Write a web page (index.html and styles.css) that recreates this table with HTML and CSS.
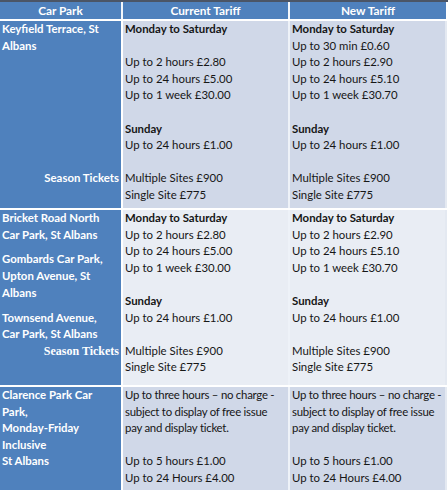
FILE: index.html
```html
<!DOCTYPE html>
<html>
<head>
<meta charset="utf-8">
<link rel="stylesheet" href="styles.css">
</head>
<body>
<div class="frame">
<table class="tariffs">
  <colgroup>
    <col class="c1">
    <col class="c2">
    <col class="c3">
  </colgroup>
  <thead>
    <tr>
      <th class="h1">Car Park</th>
      <th class="h2">Current Tariff</th>
      <th class="h3">New Tariff</th>
    </tr>
  </thead>
  <tbody>
    <tr class="dark r1">
      <td class="park">
        <div class="l">Keyfield Terrace, St</div>
        <div class="l">Albans</div>
        <div class="l"></div><div class="l"></div><div class="l"></div><div class="l"></div><div class="l"></div><div class="l"></div><div class="l"></div>
        <div class="l season">Season Tickets</div>
      </td>
      <td class="tariff">
        <div class="l b">Monday to Saturday</div>
        <div class="l"></div>
        <div class="l">Up to 2 hours £2.80</div>
        <div class="l">Up to 24 hours £5.00</div>
        <div class="l">Up to 1 week £30.00</div>
        <div class="l"></div>
        <div class="l b">Sunday</div>
        <div class="l">Up to 24 hours £1.00</div>
        <div class="l"></div>
        <div class="l">Multiple Sites £900</div>
        <div class="l">Single Site £775</div>
      </td>
      <td class="tariff new">
        <div class="l b">Monday to Saturday</div>
        <div class="l">Up to 30 min £0.60</div>
        <div class="l">Up to 2 hours £2.90</div>
        <div class="l">Up to 24 hours £5.10</div>
        <div class="l">Up to 1 week £30.70</div>
        <div class="l"></div>
        <div class="l b">Sunday</div>
        <div class="l">Up to 24 hours £1.00</div>
        <div class="l"></div>
        <div class="l">Multiple Sites £900</div>
        <div class="l">Single Site £775</div>
      </td>
    </tr>
    <tr class="light r2">
      <td class="park">
        <div class="l">Bricket Road North</div>
        <div class="l">Car Park, St Albans</div>
        <div class="l gap">Gombards Car Park,</div>
        <div class="l">Upton Avenue, St</div>
        <div class="l">Albans</div>
        <div class="l gap">Townsend Avenue,</div>
        <div class="l">Car Park, St Albans</div>
        <div class="l season serif">Season Tickets</div>
      </td>
      <td class="tariff">
        <div class="l b">Monday to Saturday</div>
        <div class="l">Up to 2 hours £2.80</div>
        <div class="l">Up to 24 hours £5.00</div>
        <div class="l">Up to 1 week £30.00</div>
        <div class="l"></div>
        <div class="l b">Sunday</div>
        <div class="l">Up to 24 hours £1.00</div>
        <div class="l"></div>
        <div class="l">Multiple Sites £900</div>
        <div class="l">Single Site £775</div>
      </td>
      <td class="tariff new">
        <div class="l b">Monday to Saturday</div>
        <div class="l">Up to 2 hours £2.90</div>
        <div class="l">Up to 24 hours £5.10</div>
        <div class="l">Up to 1 week £30.70</div>
        <div class="l"></div>
        <div class="l b">Sunday</div>
        <div class="l">Up to 24 hours £1.00</div>
        <div class="l"></div>
        <div class="l">Multiple Sites £900</div>
        <div class="l">Single Site £775</div>
      </td>
    </tr>
    <tr class="dark r3">
      <td class="park">
        <div class="l">Clarence Park Car</div>
        <div class="l">Park,</div>
        <div class="l">Monday-Friday</div>
        <div class="l">Inclusive</div>
        <div class="l">St Albans</div>
      </td>
      <td class="tariff">
        <div class="l tight">Up to three hours – no charge -</div>
        <div class="l tight">subject to display of free issue</div>
        <div class="l tight">pay and display ticket.</div>
        <div class="l"></div>
        <div class="l">Up to 5 hours £1.00</div>
        <div class="l">Up to 24 Hours £4.00</div>
      </td>
      <td class="tariff new">
        <div class="l tight">Up to three hours – no charge -</div>
        <div class="l tight">subject to display of free issue</div>
        <div class="l tight">pay and display ticket.</div>
        <div class="l"></div>
        <div class="l">Up to 5 hours £1.00</div>
        <div class="l">Up to 24 Hours £4.00</div>
      </td>
    </tr>
  </tbody>
</table>
</div>
</body>
</html>
```

FILE: styles.css
```css
html, body {
  margin: 0;
  padding: 0;
  background: #ffffff;
}

.frame {
  width: 448px;
  height: 492px;
  overflow: hidden;
  border-top: 2px solid #4b5566;
  box-sizing: border-box;
}

.tariffs {
  border-collapse: collapse;
  table-layout: fixed;
  width: 446px;
  font-family: Lato, "Liberation Sans", sans-serif;
  font-size: 11.4px;
  color: #161616;
}

.c1 { width: 122px; }
.c2 { width: 167px; }
.c3 { width: 157px; }

th {
  background: #4f81bd;
  color: #ffffff;
  font-weight: bold;
  font-size: 11.8px;
  height: 17px;
  padding: 0;
  line-height: 17px;
  text-align: center;
  border-bottom: 2px solid #ffffff;
}

th.h1, th.h2 { border-right: 2px solid #f4f7fb; }

td {
  vertical-align: top;
  padding: 0 2px;
  border-bottom: 2px solid #ffffff;
}

td.park {
  background: #4f81bd;
  color: #ffffff;
  font-weight: bold;
  border-right: 2px solid #ffffff;
}

td.tariff { border-right: 2px solid #eef2f8; }
td.tariff.new { border-right: 2px solid #e4e9f1; }

.dark td.tariff { background: #d0d8e8; }
.light td.tariff { background: #e9edf4; }

.r1 td { height: 187px; }
.r2 td { height: 175px; }
.r3 td { height: 103px; }

.l {
  height: 16.6px;
  line-height: 16.6px;
  white-space: nowrap;
}

.b { font-weight: bold; }

.tight { letter-spacing: -0.25px; }

.gap { margin-top: 8.3px; }

.season { text-align: right; }

.serif {
  font-family: "Liberation Serif", serif;
  font-size: 12px;
}
```
